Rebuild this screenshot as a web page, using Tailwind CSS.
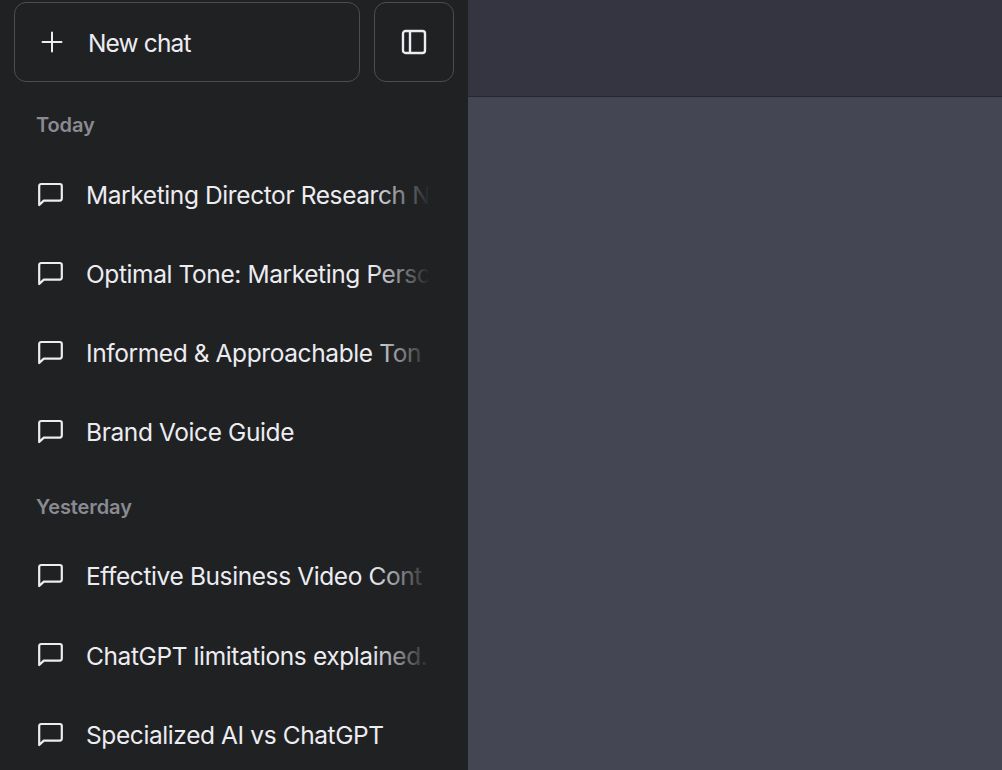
<!DOCTYPE html>
<html lang="en">
<head>
<meta charset="UTF-8">
<title>ChatGPT</title>
<script src="https://cdn.jsdelivr.net/npm/@tailwindcss/browser@4"></script>
</head>
<body class="h-[770px] w-[1002px] overflow-hidden bg-[#444654] font-['Inter',sans-serif] antialiased">
<div class="flex h-full">
  <!-- Sidebar -->
  <nav class="h-full w-[468px] shrink-0 overflow-hidden bg-[#202123] text-[#ececf1]">
    <div class="flex gap-[14px] pl-[14px] pt-[2px]">
      <button class="flex h-[80px] w-[346px] items-center gap-[24px] rounded-[12px] border border-[#4d4d4f] pl-[25px] text-[24.5px] tracking-[-0.85px]">
        <svg class="h-[24px] w-[24px]" viewBox="0 0 24 24" fill="none" stroke="currentColor" stroke-width="2" stroke-linecap="round"><path d="M12 2.5v19M2.5 12h19"/></svg>
        <span class="pt-[2px]">New chat</span>
      </button>
      <button class="flex h-[80px] w-[80px] items-center justify-center rounded-[12px] border border-[#4d4d4f]">
        <svg class="h-[26px] w-[26px]" viewBox="0 0 26 26" fill="none" stroke="currentColor" stroke-width="2.4"><rect x="2" y="2" width="22" height="22" rx="2.5"/><path d="M9 2v22"/></svg>
      </button>
    </div>

    <h3 class="mt-[28px] pl-[36px] text-[20px] leading-[30px] font-semibold tracking-[-0.1px] text-[#8a8b92]">Today</h3>
    <ul class="mt-[15px]">
      <li class="relative flex h-[79px] items-center gap-[22px] pl-[37px]">
        <svg class="h-[26px] w-[27px] shrink-0" viewBox="0 0 27 26" fill="none" stroke="currentColor" stroke-width="2.2"><path d="M2.2 23V4a2 2 0 0 1 2-2h18.6a2 2 0 0 1 2 2v12.6a2 2 0 0 1-2 2H6.8z" stroke-linejoin="round"/></svg>
        <span class="w-[342px] overflow-hidden pt-[2px] text-[24.5px] tracking-[-0.4px] whitespace-nowrap">Marketing Director Research N</span>
        <div class="absolute top-0 left-[372px] h-full w-[58px] bg-gradient-to-r from-[#202123]/0 to-[#202123]"></div>
      </li>
      <li class="relative flex h-[79px] items-center gap-[22px] pl-[37px]">
        <svg class="h-[26px] w-[27px] shrink-0" viewBox="0 0 27 26" fill="none" stroke="currentColor" stroke-width="2.2"><path d="M2.2 23V4a2 2 0 0 1 2-2h18.6a2 2 0 0 1 2 2v12.6a2 2 0 0 1-2 2H6.8z" stroke-linejoin="round"/></svg>
        <span class="w-[342px] overflow-hidden pt-[2px] text-[24.5px] tracking-[-0.4px] whitespace-nowrap">Optimal Tone: Marketing Perso</span>
        <div class="absolute top-0 left-[372px] h-full w-[58px] bg-gradient-to-r from-[#202123]/0 to-[#202123]"></div>
      </li>
      <li class="relative flex h-[79px] items-center gap-[22px] pl-[37px]">
        <svg class="h-[26px] w-[27px] shrink-0" viewBox="0 0 27 26" fill="none" stroke="currentColor" stroke-width="2.2"><path d="M2.2 23V4a2 2 0 0 1 2-2h18.6a2 2 0 0 1 2 2v12.6a2 2 0 0 1-2 2H6.8z" stroke-linejoin="round"/></svg>
        <span class="w-[342px] overflow-hidden pt-[2px] text-[24.5px] tracking-[-0.4px] whitespace-nowrap">Informed &amp; Approachable Ton</span>
        <div class="absolute top-0 left-[372px] h-full w-[58px] bg-gradient-to-r from-[#202123]/0 to-[#202123]"></div>
      </li>
      <li class="relative flex h-[79px] items-center gap-[22px] pl-[37px]">
        <svg class="h-[26px] w-[27px] shrink-0" viewBox="0 0 27 26" fill="none" stroke="currentColor" stroke-width="2.2"><path d="M2.2 23V4a2 2 0 0 1 2-2h18.6a2 2 0 0 1 2 2v12.6a2 2 0 0 1-2 2H6.8z" stroke-linejoin="round"/></svg>
        <span class="w-[342px] overflow-hidden pt-[2px] text-[24.5px] tracking-[-0.4px] whitespace-nowrap">Brand Voice Guide</span>
      </li>
    </ul>

    <h3 class="mt-[21px] pl-[36px] text-[20px] leading-[30px] font-semibold tracking-[-0.1px] text-[#8a8b92]">Yesterday</h3>
    <ul class="mt-[14px]">
      <li class="relative flex h-[79.5px] items-center gap-[22px] pl-[37px]">
        <svg class="h-[26px] w-[27px] shrink-0" viewBox="0 0 27 26" fill="none" stroke="currentColor" stroke-width="2.2"><path d="M2.2 23V4a2 2 0 0 1 2-2h18.6a2 2 0 0 1 2 2v12.6a2 2 0 0 1-2 2H6.8z" stroke-linejoin="round"/></svg>
        <span class="w-[342px] overflow-hidden pt-[2px] text-[24.5px] tracking-[-0.4px] whitespace-nowrap">Effective Business Video Cont</span>
        <div class="absolute top-0 left-[372px] h-full w-[58px] bg-gradient-to-r from-[#202123]/0 to-[#202123]"></div>
      </li>
      <li class="relative flex h-[79.5px] items-center gap-[22px] pl-[37px]">
        <svg class="h-[26px] w-[27px] shrink-0" viewBox="0 0 27 26" fill="none" stroke="currentColor" stroke-width="2.2"><path d="M2.2 23V4a2 2 0 0 1 2-2h18.6a2 2 0 0 1 2 2v12.6a2 2 0 0 1-2 2H6.8z" stroke-linejoin="round"/></svg>
        <span class="w-[342px] overflow-hidden pt-[2px] text-[24.5px] tracking-[-0.4px] whitespace-nowrap">ChatGPT limitations explained.</span>
        <div class="absolute top-0 left-[372px] h-full w-[58px] bg-gradient-to-r from-[#202123]/0 to-[#202123]"></div>
      </li>
      <li class="relative flex h-[79.5px] items-center gap-[22px] pl-[37px]">
        <svg class="h-[26px] w-[27px] shrink-0" viewBox="0 0 27 26" fill="none" stroke="currentColor" stroke-width="2.2"><path d="M2.2 23V4a2 2 0 0 1 2-2h18.6a2 2 0 0 1 2 2v12.6a2 2 0 0 1-2 2H6.8z" stroke-linejoin="round"/></svg>
        <span class="w-[342px] overflow-hidden pt-[2px] text-[24.5px] tracking-[-0.4px] whitespace-nowrap">Specialized AI vs ChatGPT</span>
      </li>
    </ul>
  </nav>

  <!-- Main -->
  <main class="flex-1">
    <div class="h-[97px] border-b border-[#27282f] bg-[#343541]"></div>
  </main>
</div>
</body>
</html>
